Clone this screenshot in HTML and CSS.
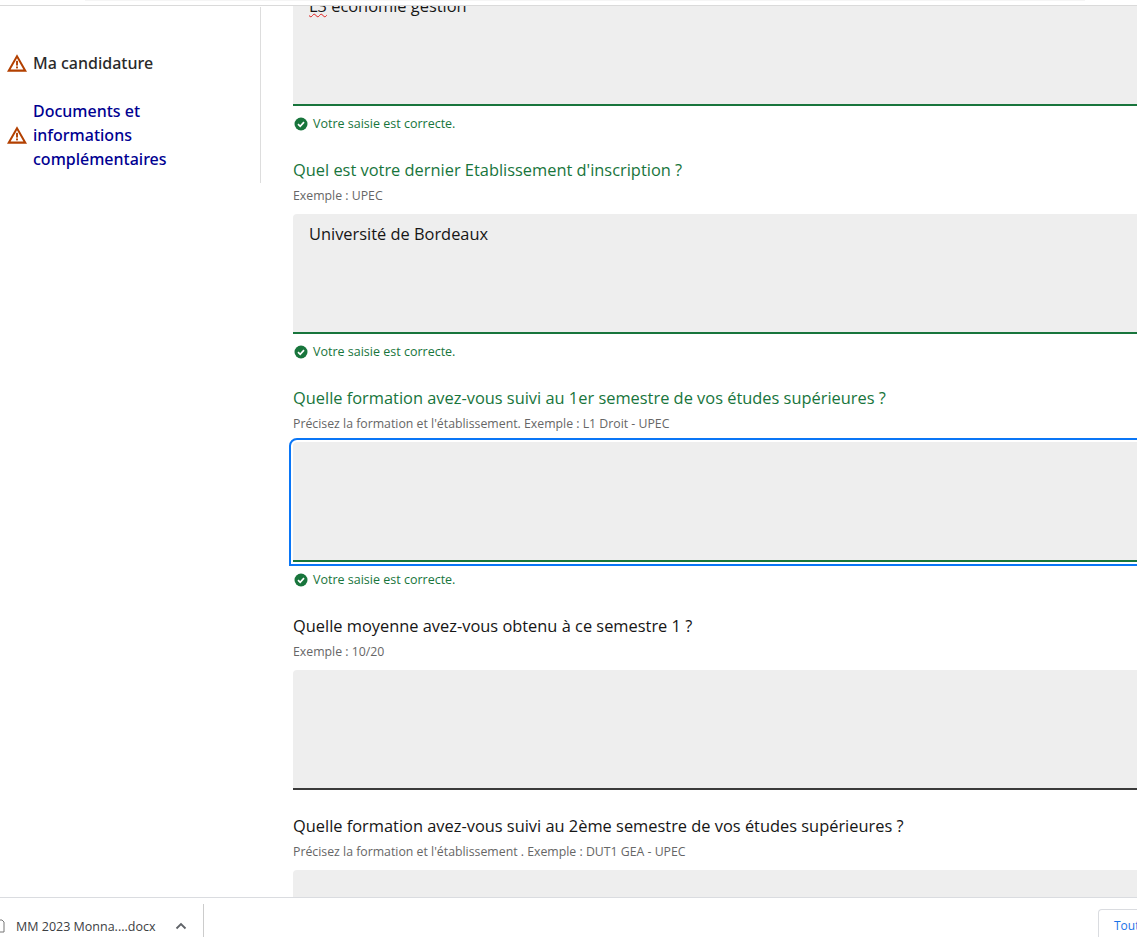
FILE: index.html
```html
<!DOCTYPE html>
<html lang="fr">
  <head>
    <meta charset="UTF-8" />
    <title>Ma candidature</title>
    <link rel="stylesheet" href="styles.css">
  </head>
  <body>
    <svg class="defs" width="0" height="0">
      <symbol id="warn" viewBox="1.4 2.6 21.2 19.4">
        <path d="M12 3 L22.6 21.5 H1.4 Z M12 7.2 L5.2 19.2 H18.8 Z" fill="#b34000" fill-rule="evenodd"/>
        <rect x="11" y="10" width="2" height="5" fill="#b34000"/>
        <rect x="11" y="16" width="2" height="2" fill="#b34000"/>
      </symbol>
      <symbol id="ok" viewBox="0 0 14 14">
        <circle cx="7" cy="7" r="6.5" fill="#18753c"/>
        <path d="M4 7.2 L6.2 9.3 L10 5.2" fill="none" stroke="#fff" stroke-width="1.7"/>
      </symbol>
    </svg>

    <div class="topstrip"><div class="topstrip-inner"></div></div>

    <div class="page">
      <nav class="sidebar">
        <a class="side-item">
          <svg class="warn-icon"><use href="#warn"/></svg>
          <span>Ma candidature</span>
        </a>
        <a class="side-item side-item-current">
          <svg class="warn-icon"><use href="#warn"/></svg>
          <span>Documents et informations complémentaires</span>
        </a>
      </nav>

      <main class="form">
        <div class="field field-first field-valid">
          <div class="input"><span class="typo">L3</span> économie gestion</div>
          <p class="msg"><svg class="ok-icon"><use href="#ok"/></svg>Votre saisie est correcte.</p>
        </div>

        <div class="field field-valid">
          <label class="label">Quel est votre dernier Etablissement d'inscription ?</label>
          <p class="hint">Exemple : UPEC</p>
          <div class="input">Université de Bordeaux</div>
          <p class="msg"><svg class="ok-icon"><use href="#ok"/></svg>Votre saisie est correcte.</p>
        </div>

        <div class="field field-valid">
          <label class="label">Quelle formation avez-vous suivi au 1er semestre de vos études supérieures ?</label>
          <p class="hint">Précisez la formation et l'établissement. Exemple : L1 Droit - UPEC</p>
          <div class="input input-focus"></div>
          <p class="msg"><svg class="ok-icon"><use href="#ok"/></svg>Votre saisie est correcte.</p>
        </div>

        <div class="field">
          <label class="label">Quelle moyenne avez-vous obtenu à ce semestre 1 ?</label>
          <p class="hint">Exemple : 10/20</p>
          <div class="input"></div>
        </div>

        <div class="field">
          <label class="label">Quelle formation avez-vous suivi au 2ème semestre de vos études supérieures ?</label>
          <p class="hint">Précisez la formation et l'établissement . Exemple : DUT1 GEA - UPEC</p>
          <div class="input"></div>
        </div>
      </main>
    </div>

    <footer class="downloads">
      <div class="dl-file">
        <svg class="dl-doc" viewBox="0 0 12 14"><path d="M-4 1 H2 L4 3 V13 H-4 Z" fill="none" stroke="#777" stroke-width="1"/></svg>
        <span class="dl-name">MM 2023 Monna....docx</span>
        <svg class="dl-chevron" viewBox="0 0 12 8"><path d="M1.5 6.5 L6 2 L10.5 6.5" fill="none" stroke="#5f6368" stroke-width="1.8"/></svg>
      </div>
      <button class="dl-all">Tout</button>
    </footer>
  </body>
</html>
```

FILE: styles.css
```css
html,
body {
  margin: 0;
  padding: 0;
  height: 100%;
  overflow: hidden;
}
body {
  display: flex;
  flex-direction: column;
  font-family: "Open Sans", "Noto Sans", sans-serif;
  color: #161616;
  background-color: #fff;
}
.defs {
  position: absolute;
}

.topstrip {
  flex: none;
  height: 5px;
  border-bottom: 1px solid #dadada;
}
.topstrip-inner {
  height: 1px;
  margin: 0 52px 0 85px;
  background-color: #f5f5f5;
}

.page {
  flex: 1;
  min-height: 0;
  display: flex;
  align-items: flex-start;
  overflow: hidden;
}

/* side menu */
.sidebar {
  flex: none;
  box-sizing: border-box;
  width: 261px;
  height: 176px;
  margin-top: 1px;
  padding: 44px 0 0 7px;
  border-right: 1px solid #ddd;
}
.side-item {
  display: flex;
  align-items: center;
  gap: 6px;
  margin-bottom: 24px;
  font-family: "Noto Sans", sans-serif;
  font-size: 16px;
  font-weight: 500;
  line-height: 24px;
  color: #2a2a2a;
}
.side-item-current {
  color: #000091;
}
.side-item-current span {
  width: 170px;
}
.warn-icon {
  flex: none;
  width: 20px;
  height: 20px;
}

/* form */
.form {
  flex: 1;
  min-width: 0;
  margin-left: 32px;
}
.field {
  margin-bottom: 24px;
}
.field-first {
  margin-top: -20px;
}
.label {
  display: block;
  font-size: 16.4px;
  line-height: 24px;
}
.hint {
  margin: 4px 0 8px;
  font-size: 12.3px;
  line-height: 20px;
  color: #666;
}
.input {
  box-sizing: border-box;
  height: 120px;
  padding: 8px 16px;
  background-color: #eee;
  border-bottom: 2px solid #3a3a3a;
  border-radius: 4px 0 0 0;
  font-size: 16.4px;
  line-height: 24px;
}
.input-focus {
  outline: 2px solid #0a76f6;
  outline-offset: 2px;
}
.field-valid .label,
.field-valid .msg {
  color: #18753c;
}
.field-valid .input {
  border-bottom-color: #18753c;
}
.msg {
  display: flex;
  align-items: center;
  gap: 5px;
  margin: 8px 0 0;
  padding-left: 1px;
  font-size: 12.5px;
  line-height: 20px;
}
.ok-icon {
  flex: none;
  width: 14px;
  height: 14px;
}
.typo {
  text-decoration: underline wavy #e02020 1px;
}

/* browser download bar */
.downloads {
  flex: none;
  box-sizing: border-box;
  height: 40px;
  display: flex;
  align-items: flex-end;
  justify-content: space-between;
  border-top: 1px solid #dadce0;
  background-color: #fff;
}
.dl-file {
  display: flex;
  align-items: center;
  box-sizing: border-box;
  width: 204px;
  height: 33px;
  padding-top: 11px;
  border-right: 1px solid #ccc;
  font-size: 12.5px;
  color: #3c4043;
}
.dl-doc {
  flex: none;
  width: 12px;
  height: 14px;
  margin-right: 4px;
}
.dl-name {
  flex: none;
  width: 159px;
}
.dl-chevron {
  flex: none;
  width: 12px;
  height: 8px;
}
.dl-all {
  box-sizing: border-box;
  flex: none;
  width: 39px;
  height: 28px;
  padding: 3px 0 0 15px;
  border: 1px solid #dadce0;
  border-width: 1px 0 0 1px;
  border-radius: 4px 0 0 0;
  background-color: #fff;
  font-family: "Open Sans", sans-serif;
  font-size: 12px;
  color: #1a73e8;
  text-align: left;
}
```
